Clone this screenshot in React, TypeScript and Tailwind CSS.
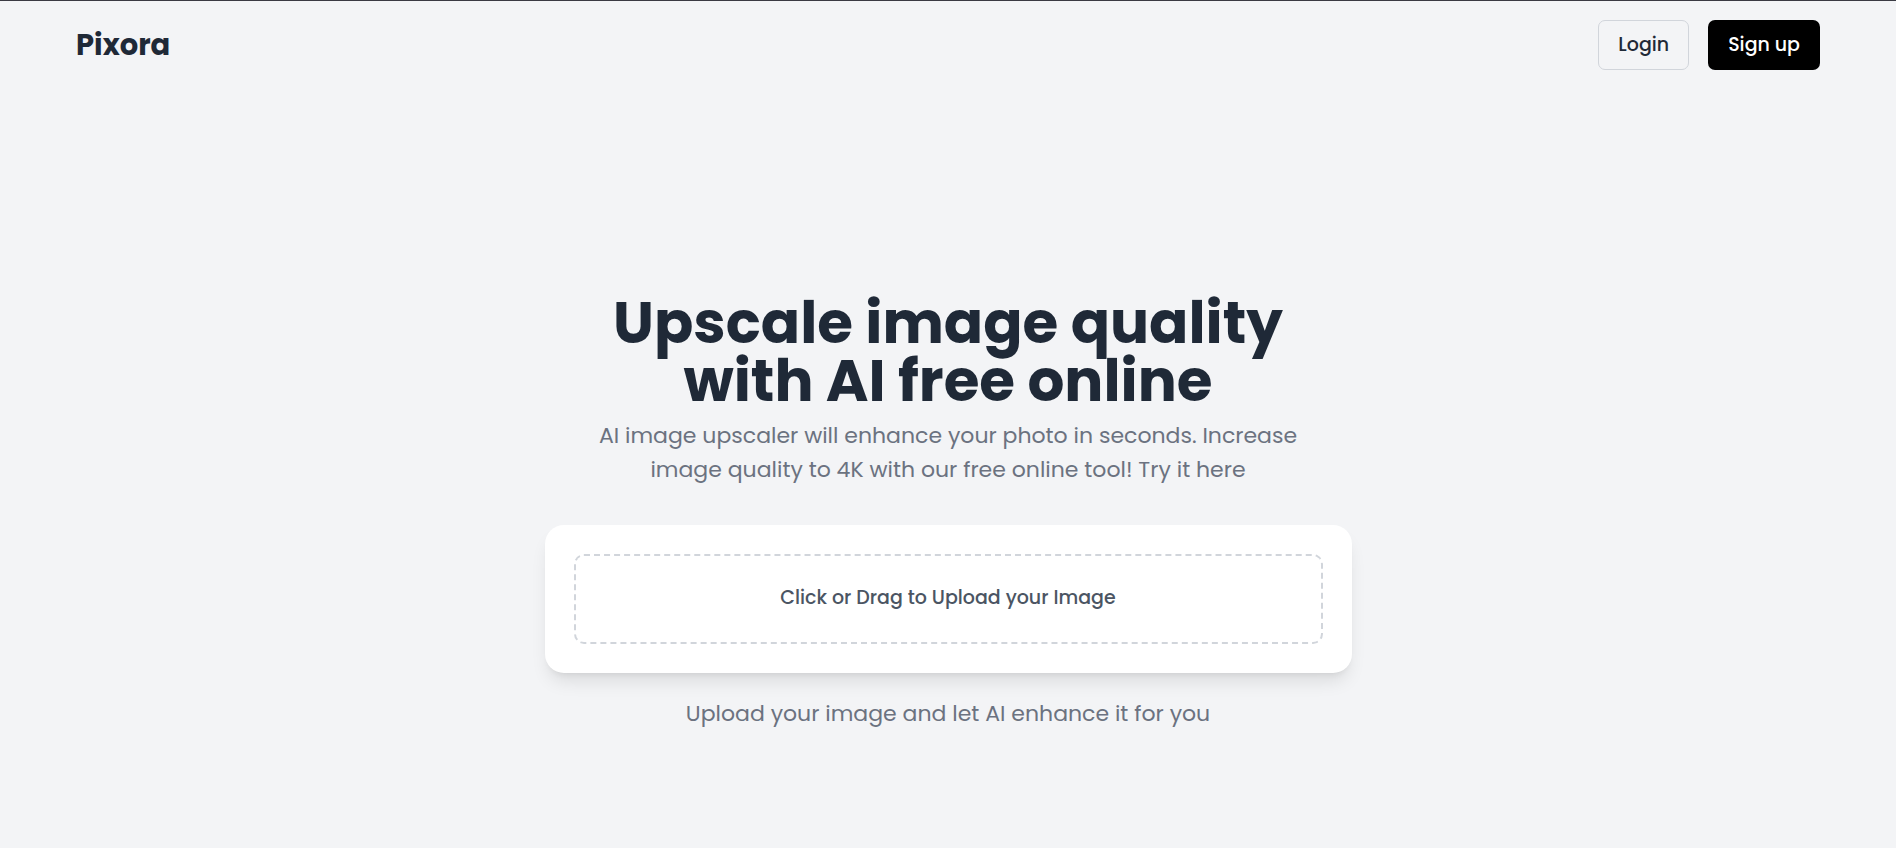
import { useState } from "react";

function Header() {
  return (
    <header className="flex items-center justify-between px-[76px] py-[19px]">
      <a href="#" className="text-[29px] leading-[50px] font-bold text-[#1f2937]">
        Pixora
      </a>
      <nav className="flex gap-[19px]">
        <button
          type="button"
          className="h-[50px] rounded-[7px] border border-[#d1d5db] px-[19px] text-[19px] font-medium text-[#1f2937]"
        >
          Login
        </button>
        <button
          type="button"
          className="h-[50px] rounded-[7px] bg-black px-5 text-[19px] font-medium text-white"
        >
          Sign up
        </button>
      </nav>
    </header>
  );
}

function UploadCard() {
  const [fileName, setFileName] = useState("");

  return (
    <div className="w-full max-w-[807px] rounded-[19px] bg-white p-[29px] shadow-[0_12px_18px_-4px_rgba(0,0,0,0.1),0_5px_7px_-5px_rgba(0,0,0,0.1)]">
      <label
        htmlFor="image-upload"
        className="flex h-[90px] cursor-pointer items-center justify-center rounded-[10px] border-2 border-dashed border-[#d1d5db] pb-1 text-[19px] leading-[29px] font-medium text-[#4b5563]"
      >
        {fileName || "Click or Drag to Upload your Image"}
      </label>
      <input
        id="image-upload"
        type="file"
        accept="image/*"
        className="hidden"
        onChange={(event) => setFileName(event.target.files?.[0]?.name ?? "")}
      />
    </div>
  );
}

export default function App() {
  return (
    <div className="min-h-screen border-t border-[#3a3a42] bg-[#f3f4f6] font-['Poppins','Inter',sans-serif]">
      <Header />
      <main className="flex flex-col items-center px-6 pt-[205px] pb-16 text-center">
        <h1 className="max-w-[806px] text-[58px] leading-[58px] font-bold text-[#1f2937]">
          Upscale image quality
          <br />
          with AI free online
        </h1>
        <p className="mt-[9px] mb-[38px] max-w-[806px] text-[22px] leading-[34px] text-[#6b7280]">
          AI image upscaler will enhance your photo in seconds. Increase
          <br />
          image quality to 4K with our free online tool! Try it here
        </p>
        <UploadCard />
        <p className="mt-[24px] text-[22px] leading-[34px] text-[#6b7280]">
          Upload your image and let AI enhance it for you
        </p>
      </main>
    </div>
  );
}
